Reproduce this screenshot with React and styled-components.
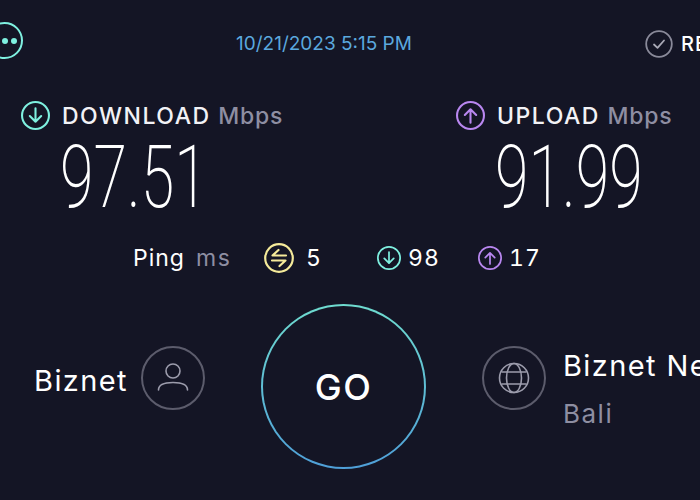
import React from 'react'
import styled, { createGlobalStyle } from 'styled-components'

const GlobalStyle = createGlobalStyle`
  html, body {
    margin: 0;
    padding: 0;
    background: #141525;
  }
`

const TEAL = '#7ff0e0'
const PURPLE = '#b987f0'
const YELLOW = '#f5ea9a'
const GREY = '#8e8ea2'
const RING = '#5c5c6c'

const App = () => {
  return (
    <Page>
      <GlobalStyle />
      <Header>
        <DotsButton>
          <Dot />
          <Dot />
          <Dot />
        </DotsButton>
        <DateText>10/21/2023 5:15 PM</DateText>
        <Results>
          <CheckIcon />
          <ResultsLabel>RESULTS</ResultsLabel>
        </Results>
      </Header>

      <Speeds>
        <Speed>
          <SpeedHead>
            <ArrowIcon size={29} color={TEAL} />
            <SpeedLabel>DOWNLOAD <Unit>Mbps</Unit></SpeedLabel>
          </SpeedHead>
          <SpeedValue>97.51</SpeedValue>
        </Speed>
        <Speed>
          <SpeedHead>
            <ArrowIcon size={29} color={PURPLE} up />
            <SpeedLabel>UPLOAD <Unit>Mbps</Unit></SpeedLabel>
          </SpeedHead>
          <SpeedValue>91.99</SpeedValue>
        </Speed>
      </Speeds>

      <PingRow>
        <PingLabel>Ping</PingLabel>
        <PingUnit>ms</PingUnit>
        <PingIcon />
        <PingValue>5</PingValue>
        <JitterGroup>
          <ArrowIcon size={24} color={TEAL} />
          <PingNumber>98</PingNumber>
        </JitterGroup>
        <JitterGroup>
          <ArrowIcon size={24} color={PURPLE} up />
          <PingNumber>17</PingNumber>
        </JitterGroup>
      </PingRow>

      <Bottom>
        <Provider>
          <ProviderName $lower>Biznet</ProviderName>
          <RoundIcon>
            <UserIcon />
          </RoundIcon>
        </Provider>
        <GoRing>
          <GoText>GO</GoText>
        </GoRing>
        <Server>
          <RoundIcon>
            <GlobeIcon />
          </RoundIcon>
          <ServerText>
            <ProviderName>Biznet Networks</ProviderName>
            <ServerCity>Bali</ServerCity>
          </ServerText>
        </Server>
      </Bottom>
    </Page>
  )
}

const ArrowIcon = ({ size, color, up }) => (
  <svg width={size} height={size} viewBox="0 0 28 28" fill="none" stroke={color} strokeWidth="2" strokeLinecap="round" strokeLinejoin="round" style={{ flexShrink: 0 }}>
    <circle cx="14" cy="14" r="13" />
    {up ? (
      <path d="M14 21V8M8.500 13.500L14 8l5.500 5.500" />
    ) : (
      <path d="M14 7v13M8.500 14.500L14 20l5.500-5.500" />
    )}
  </svg>
)

const CheckIcon = () => (
  <svg width="28" height="28" viewBox="0 0 28 28" fill="none" stroke="#8a8a9a" strokeWidth="1.800" strokeLinecap="round" strokeLinejoin="round">
    <circle cx="14" cy="14" r="12.800" />
    <path d="M9 14.500l3.500 3.300 6.500-7.300" stroke="#a9a9b6" />
  </svg>
)

const PingIcon = () => (
  <svg width="30" height="30" viewBox="0 0 30 30" fill="none" stroke={YELLOW} strokeWidth="2.200" strokeLinecap="round" strokeLinejoin="round">
    <circle cx="15" cy="15" r="13.800" />
    <path d="M22 12.500H8.500L14.500 7M8 17.500h13.500L15.500 23" />
  </svg>
)

const UserIcon = () => (
  <svg width="32" height="32" viewBox="0 0 32 32" fill="none" stroke="#9c9cac" strokeWidth="1.600" strokeLinecap="round">
    <circle cx="16" cy="9" r="7" />
    <path d="M1.500 28c0-5 6-7.500 14.500-7.500s14.500 2.500 14.500 7.500" />
  </svg>
)

const GlobeIcon = () => (
  <svg width="32" height="32" viewBox="0 0 32 32" fill="none" stroke="#9c9cac" strokeWidth="1.600">
    <circle cx="16" cy="16" r="14.500" />
    <ellipse cx="16" cy="16" rx="7.500" ry="14.500" />
    <path d="M3.500 10h25M3.500 22h25" />
  </svg>
)

const Page = styled.div`
  width: 700px;
  height: 500px;
  overflow: hidden;
  background: #141525;
  color: #fff;
  font-family: Inter, "Open Sans", sans-serif;
  display: flex;
  flex-direction: column;
`

const Header = styled.header`
  display: flex;
  align-items: flex-start;
  height: 36px;
  margin-top: 22px;
  margin-left: -14px;
`

const DotsButton = styled.div`
  width: 37px;
  height: 37px;
  box-sizing: border-box;
  border: 2px solid ${TEAL};
  border-radius: 50%;
  display: flex;
  align-items: center;
  justify-content: center;
  gap: 3px;
  flex-shrink: 0;
`

const Dot = styled.span`
  width: 6px;
  height: 6px;
  border-radius: 50%;
  background: ${TEAL};
  flex-shrink: 0;
`

const DateText = styled.div`
  margin: 4px 0 0 213px;
  font-size: 19px;
  line-height: 36px;
  color: #5ba8de;
  white-space: nowrap;
  width: 175px;
`

const Results = styled.div`
  margin: 8px 0 0 234px;
  display: flex;
  align-items: center;
  gap: 8px;
  flex-shrink: 0;
`

const ResultsLabel = styled.span`
  font-size: 20px;
  font-weight: 500;
  letter-spacing: 1px;
`

const Speeds = styled.section`
  display: grid;
  grid-template-columns: 435px 1fr;
  padding-left: 21px;
  margin-top: 43px;
`

const Speed = styled.div`
  display: flex;
  flex-direction: column;
`

const SpeedHead = styled.div`
  display: flex;
  align-items: center;
  gap: 12px;
  height: 29px;
`

const SpeedLabel = styled.div`
  font-size: 23px;
  font-weight: 500;
  letter-spacing: 1.500px;
  color: #f2f2f6;
  white-space: nowrap;
`

const Unit = styled.span`
  letter-spacing: 0.800px;
  color: ${GREY};
`

const SpeedValue = styled.div`
  margin-left: 39px;
  margin-top: 8px;
  height: 78px;
  font-family: Roboto, sans-serif;
  font-weight: 200;
  font-size: 87px;
  line-height: 78px;
  color: #fff;
  transform: scaleX(0.7);
  transform-origin: left center;
`

const PingRow = styled.section`
  display: flex;
  align-items: center;
  height: 32px;
  margin-top: 26px;
  padding-left: 133px;
  font-size: 23px;
  letter-spacing: 1px;
  font-variant-numeric: tabular-nums;
`

const PingLabel = styled.span`
  width: 63px;
`

const PingUnit = styled.span`
  width: 68px;
  letter-spacing: 1.500px;
  color: ${GREY};
`

const PingValue = styled.span`
  margin-left: 12px;
  width: 71px;
`

const JitterGroup = styled.div`
  display: flex;
  align-items: center;
  gap: 7px;
  width: 101px;
`

const PingNumber = styled.span``

const Bottom = styled.section`
  display: grid;
  grid-template-columns: 261px 165px 1fr;
  margin-top: 30px;
`

const Provider = styled.div`
  display: flex;
  align-items: center;
  justify-content: flex-end;
  gap: 13px;
  padding: 0 56px 12px 0;
  height: 148px;
`

const ProviderName = styled.div`
  font-size: 29px;
  letter-spacing: 1.400px;
  white-space: nowrap;
  margin-top: ${props => props.$lower ? '4px' : '0'};
`

const RoundIcon = styled.div`
  width: 64px;
  height: 64px;
  box-sizing: border-box;
  border: 2px solid ${RING};
  border-radius: 50%;
  display: flex;
  align-items: center;
  justify-content: center;
  flex-shrink: 0;
`

const GoRing = styled.div`
  width: 165px;
  height: 165px;
  box-sizing: border-box;
  border: 2px solid transparent;
  border-radius: 50%;
  background: linear-gradient(#141525, #141525) padding-box,
    linear-gradient(180deg, #6fdcd0, #4f9fd8) border-box;
  display: flex;
  align-items: center;
  justify-content: center;
`

const GoText = styled.span`
  font-size: 36px;
  font-weight: 500;
  letter-spacing: 1.500px;
`

const Server = styled.div`
  display: flex;
  align-items: center;
  gap: 17px;
  padding: 0 0 12px 56px;
  height: 148px;
  min-width: 0;
`

const ServerText = styled.div`
  display: flex;
  flex-direction: column;
  gap: 15px;
  margin-top: 20px;
`

const ServerCity = styled.div`
  font-size: 26px;
  letter-spacing: 1.500px;
  color: ${GREY};
`

export default App
